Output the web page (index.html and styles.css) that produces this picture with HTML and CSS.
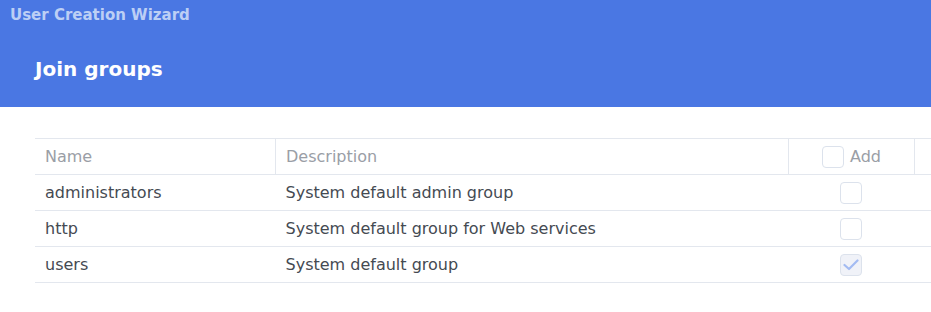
FILE: index.html
```html
<!DOCTYPE html>
<html lang="en">
  <head>
    <meta charset="UTF-8" />
    <title>User Creation Wizard</title>
    <link rel="stylesheet" href="styles.css">
  </head>
  <body>
    <header class="wizard-header">
      <div class="wizard-title">User Creation Wizard</div>
      <h1 class="step-title">Join groups</h1>
    </header>

    <div class="wizard-body">
      <table class="group-table">
        <thead>
          <tr>
            <th class="col-name">Name</th>
            <th class="col-desc">Description</th>
            <th class="col-add">
              <span class="add-head"><span class="checkbox"></span>Add</span>
            </th>
            <th class="col-rest"></th>
          </tr>
        </thead>
        <tbody>
          <tr>
            <td>administrators</td>
            <td>System default admin group</td>
            <td class="center"><span class="checkbox"></span></td>
            <td></td>
          </tr>
          <tr>
            <td>http</td>
            <td>System default group for Web services</td>
            <td class="center"><span class="checkbox"></span></td>
            <td></td>
          </tr>
          <tr>
            <td>users</td>
            <td>System default group</td>
            <td class="center">
              <span class="checkbox checked">
                <svg width="16" height="12" viewBox="0 0 16 12">
                  <path d="M1.5 6 L6 10 L14.5 1.5" fill="none" stroke="#a3bbf2" stroke-width="2.2" stroke-linecap="round" stroke-linejoin="round" />
                </svg>
              </span>
            </td>
            <td></td>
          </tr>
        </tbody>
      </table>
    </div>
  </body>
</html>
```

FILE: styles.css
```css
body {
  margin: 0;
  background: #ffffff;
  font-family: "DejaVu Sans", Verdana, sans-serif;
  overflow: hidden;
}

.wizard-header {
  background: #4a77e3;
  height: 107px;
  box-sizing: border-box;
  padding: 5px 0 0 10px;
}

.wizard-title {
  font-size: 15px;
  font-weight: bold;
  color: #bccff5;
  line-height: 20px;
}

.step-title {
  margin: 0;
  padding: 31px 0 0 25px;
  font-size: 20px;
  font-weight: bold;
  color: #ffffff;
  line-height: 26px;
}

.wizard-body {
  padding: 31px 0 0 35px;
}

.group-table {
  width: 896px;
  border-collapse: collapse;
  table-layout: fixed;
  font-size: 16px;
}

.group-table th,
.group-table td {
  height: 35px;
  padding: 0 10px;
  text-align: left;
  border-top: 1px solid #e3e7ee;
  border-bottom: 1px solid #e3e7ee;
  color: #454a52;
  font-weight: normal;
}

.group-table th {
  color: #9a9ea6;
  border-right: 1px solid #e3e7ee;
}

.group-table th:last-child {
  border-right: none;
}

.col-name {
  width: 220px;
}

.col-desc {
  width: 492px;
}

.col-add {
  width: 105px;
}

.center {
  text-align: center !important;
  padding-right: 12px !important;
}

.add-head {
  display: flex;
  align-items: center;
  gap: 6px;
  padding-left: 23px;
}

.checkbox {
  display: inline-flex;
  align-items: center;
  justify-content: center;
  width: 20px;
  height: 20px;
  border: 1px solid #dce2ec;
  border-radius: 4px;
  vertical-align: middle;
  background: #ffffff;
}

.checkbox.checked {
  background: #f0f2f8;
}
```
